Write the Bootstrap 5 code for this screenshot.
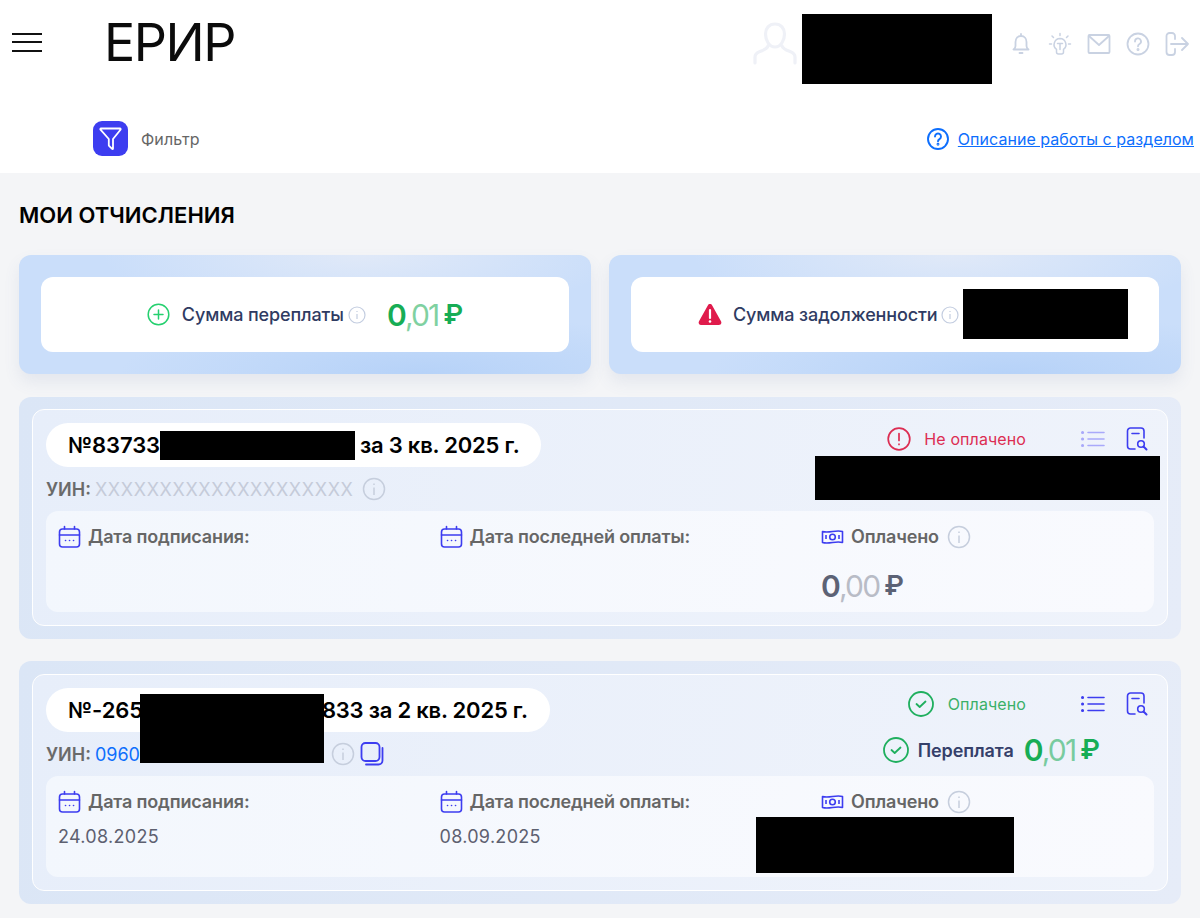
<!DOCTYPE html>
<html lang="ru">
<head>
<meta charset="utf-8">
<title>ЕРИР</title>
<link href="https://cdn.jsdelivr.net/npm/bootstrap@5.3.0/dist/css/bootstrap.min.css" rel="stylesheet">
<style>
html,body{height:918px;overflow:hidden}
body{background:#f4f5f7;font-family:Inter,"Noto Sans",sans-serif;color:#000}
svg{display:block;flex:none}
.topbar{background:#fff;height:173px}
.toprow{height:88px;padding:0 11px 0 12px}
.burger{width:30px;margin-top:-4px}
.burger span{display:block;height:2px;background:#111;margin-bottom:6.5px}
.burger span:last-child{margin-bottom:0}
.logotype{font-size:52px;line-height:1;font-weight:400;letter-spacing:-1.5px;color:#0b0b0b;margin-left:62px;margin-top:-2px}
.userzone{margin-left:auto;gap:5px}
.redact{background:#000}
.userbox{width:190px;height:70px;margin-top:10px;margin-right:12px}
.topicons{gap:15px;color:#c9d2e2}
.subrow{margin-top:33px;padding:0 6px 0 93px;height:35px}
.filterbtn{width:35px;height:35px;border-radius:9px;background:#3d3df0;border:0;padding:0}
.filtertxt{color:#666;font-size:16px;margin-left:13px;letter-spacing:.1px}
.helplink{color:#0d6efd;font-size:16px;text-decoration:underline;margin-left:9px;letter-spacing:.04px}
.maintitle{font-size:22px;font-weight:600;line-height:28px;margin:28px 0 26px}
.content{padding:0 19px}
.sumgrid{display:grid;grid-template-columns:1fr 1fr;gap:18px}
.sumouter{height:119px;padding:22px;border-radius:12px;background:radial-gradient(ellipse 300px 60px at 70% 100%,#b6d2f8,transparent),radial-gradient(ellipse 260px 60px at 60% 0,#e0e9f8,transparent),#cadefa;box-shadow:0 8px 16px rgba(90,110,160,.1)}
.suminner{height:75px;background:#fff;border-radius:12px;font-size:18px;font-weight:500;color:#2f3b62;letter-spacing:-.12px}
.money{font-weight:600;font-size:30px;line-height:34px;letter-spacing:-1.8px;display:inline-flex;align-items:center}
.money i{font-style:normal;opacity:.55;font-weight:400}
.money b{font-weight:600;margin-left:5px;letter-spacing:0;font-size:27px}
.green{color:#17ad55}
.gray{color:#5c6275}
.gray i{opacity:.4}
.dealouter{background:linear-gradient(100deg,#dbe6f6,#e6ecf8);border-radius:12px;padding:12px 13px 13px;margin-top:22px}
.dealfirst{margin-top:23px}
.dealsecond{padding-top:13px}
.dealinner{position:relative;border:1px solid #fff;border-radius:12px;padding:13px;background:linear-gradient(100deg,#e7eefa,#eff3fb)}
.dealhead{height:88px}
.pill{display:inline-flex;align-items:center;height:44px;border-radius:22px;background:#fff;padding:0 22px;font-size:22px;font-weight:600;white-space:pre;letter-spacing:-.1px}
.pilltail{letter-spacing:-.22px}
.gapmark{display:inline-block;height:29px}
.uinrow{height:44px;font-size:18px;color:#6a6a6a;font-weight:600}
.uinph{color:#c5cbd9;font-weight:400;margin-left:4px;letter-spacing:.65px}
.uinval{color:#0d6efd;font-weight:400;margin-left:4px}
.panel{height:101px;border-radius:12px;background:linear-gradient(100deg,#f3f7fd,#f9fafe);padding:14px 12px;display:grid;grid-template-columns:381.500px 381.500px 1fr}
.lbl{font-size:18px;font-weight:600;color:#666;line-height:24px;gap:6px;letter-spacing:-.15px}
.infoafter{margin-left:2px}
.val{font-size:18px;color:#5d6070;line-height:24px;margin-top:11px;letter-spacing:.3px}
.statusbar{position:absolute;right:7px;top:12px;width:345px}
.statustxt{font-size:16px;line-height:24px;letter-spacing:.1px}
.red{color:#dc2d52}
.okgreen{color:#3ab068}
.overpay{font-size:18px;font-weight:600;color:#35406a;letter-spacing:-.1px}
.blk{position:absolute}
</style>
</head>
<body>
<header class="topbar">
  <div class="toprow d-flex align-items-center">
    <div class="burger"><span></span><span></span><span></span></div>
    <div class="logotype">ЕРИР</div>
    <div class="userzone d-flex align-items-center">
      <svg width="44" height="44" viewBox="0 0 44 44" fill="none" stroke="#eff1f7" stroke-width="3.2" stroke-linecap="round" stroke-linejoin="round"><path d="M22 2c6 0 9.500 4.500 9.500 10 0 6-3.500 13-9.500 13s-9.500-7-9.500-13c0-5.500 3.500-10 9.500-10z"/><path d="M15 24c-1 3-4 4-8 5.500-3 1.200-5 2.500-5 5.500v6M29 24c1 3 4 4 8 5.500 3 1.200 5 2.500 5 5.500v6"/></svg>
      <div class="redact userbox"></div>
      <div class="topicons d-flex align-items-center">
        <svg width="24" height="24" viewBox="0 0 24 24" fill="none" stroke="currentColor" stroke-width="1.800" stroke-linecap="round" stroke-linejoin="round"><path d="M12 4c-3.500 0-5.500 2.800-5.500 6v4c0 1.500-1 2.800-2 3.500h15c-1-.7-2-2-2-3.500v-4c0-3.200-2-6-5.500-6zM12 2v2M10.500 21h3"/></svg>
        <svg width="24" height="24" viewBox="0 0 24 24" fill="none" stroke="currentColor" stroke-width="1.500" stroke-linecap="round" stroke-linejoin="round"><path d="M12 6.500a6 6 0 0 0-3.500 10.800V20a2 2 0 0 0 2 2h3a2 2 0 0 0 2-2v-2.700A6 6 0 0 0 12 6.500zM9.500 11.500h5M12 11.500v6M12 1.500v2M4 4l1.500 1.500M20 4l-1.500 1.500M1.500 12h2M20.500 12h2"/></svg>
        <svg width="24" height="24" viewBox="0 0 24 24" fill="none" stroke="currentColor" stroke-width="1.800" stroke-linejoin="round" stroke-linecap="round"><rect x="1.500" y="3" width="21" height="18" rx="1"/><path d="M2 4l10 9 10-9"/></svg>
        <svg width="24" height="24" viewBox="0 0 24 24" fill="none" stroke="currentColor" stroke-width="1.800" stroke-linecap="round"><circle cx="12" cy="12" r="10.500"/><path d="M9 9.500A3 3 0 1 1 13.500 12c-1 .6-1.500 1.200-1.500 2.300"/><circle cx="12" cy="17.500" r=".6"/></svg>
        <svg width="24" height="24" viewBox="0 0 24 24" fill="none" stroke="currentColor" stroke-width="1.800" stroke-linecap="round" stroke-linejoin="round"><path d="M10 7V4a3 3 0 0 0-3-3H4.500a3 3 0 0 0-3 3v16a3 3 0 0 0 3 3H7a3 3 0 0 0 3-3v-3M6 12h17M17 6l6 6-6 6"/></svg>
      </div>
    </div>
  </div>
  <div class="subrow d-flex align-items-center">
    <button class="filterbtn d-flex align-items-center justify-content-center" type="button" aria-label="Фильтр">
      <svg width="23" height="26" viewBox="0 0 23 26" fill="none" stroke="#fff" stroke-width="1.800" stroke-linejoin="round"><path d="M2 2.500h19c.6 0 .9.700.5 1.200L14 13v9.500c0 .6-.5.700-.9.400l-3-3a1 1 0 0 1-.3-.7V13L1.500 3.700C1.100 3.200 1.400 2.500 2 2.500z"/></svg>
    </button>
    <span class="filtertxt">Фильтр</span>
    <div class="ms-auto d-flex align-items-center">
      <svg width="22" height="22" viewBox="0 0 22 22" fill="none" stroke="#0d6efd" stroke-width="1.900" stroke-linecap="round"><circle cx="11" cy="11" r="10"/><path d="M8 8.500a3 3 0 1 1 4.500 2.600c-1 .6-1.500 1.100-1.500 2.200"/><circle cx="11" cy="16.300" r=".5"/></svg>
      <a class="helplink" href="#">Описание работы с разделом</a>
    </div>
  </div>
</header>
<main class="content">
  <h1 class="maintitle">МОИ ОТЧИСЛЕНИЯ</h1>
  <div class="sumgrid">
    <div class="sumouter">
      <div class="suminner d-flex align-items-center justify-content-center">
        <svg class="me-2" width="23" height="23" viewBox="0 0 23 23" fill="none" stroke="#25d06f" stroke-width="1.500" stroke-linecap="round"><circle cx="11.500" cy="11.500" r="10.300"/><path d="M11.500 7v9M7 11.500h9"/></svg>
        <span class="ms-1">Сумма переплаты</span>
        <svg class="ms-1" width="18" height="18" viewBox="0 0 18 18" fill="none" stroke="#c3cde0" stroke-width="1.200"><circle cx="9" cy="9" r="8"/><path d="M9 8v5M9 5v1"/></svg>
        <span class="money green" style="margin-left:21px">0<i>,01</i><b>₽</b></span>
      </div>
    </div>
    <div class="sumouter">
      <div class="suminner d-flex align-items-center position-relative" style="padding-left:67px">
        <svg width="24" height="23" viewBox="0 0 24 23" style="margin-right:11px"><path d="M12 1c1 0 1.700.5 2.200 1.400l8.800 15.900c1 1.800-.1 3.700-2.100 3.700H3.100C1.100 22 0 20.100 1 18.300L9.800 2.400C10.300 1.500 11 1 12 1z" fill="#e01b4c"/><path d="M12 7v8" stroke="#fff" stroke-width="2.200" stroke-linecap="round"/><circle cx="12" cy="18.500" r="1.300" fill="#fff"/></svg>
        <span>Сумма задолженности</span>
        <svg class="ms-1" width="18" height="18" viewBox="0 0 18 18" fill="none" stroke="#c3cde0" stroke-width="1.200"><circle cx="9" cy="9" r="8"/><path d="M9 8v5M9 5v1"/></svg>
        <div class="redact blk" style="left:332px;top:12px;width:165px;height:50px"></div>
      </div>
    </div>
  </div>

  <section class="dealouter dealfirst">
    <div class="dealinner">
      <div class="dealhead">
        <div class="pill">№83733<span class="gapmark redact" style="width:194.700px"></span><span class="pilltail"> за 3 кв. 2025 г.</span></div>
        <div class="uinrow d-flex align-items-center">УИН: <span class="uinph">XXXXXXXXXXXXXXXXXXXX</span>
          <svg class="ms-2" width="24" height="24" viewBox="0 0 24 24" fill="none" stroke="#c6cedd" stroke-width="1.500"><circle cx="12" cy="12" r="10.500"/><path d="M12 10.500V18M12 6.500V8"/></svg>
        </div>
      </div>
      <div class="panel">
        <div class="lbl d-flex"><svg width="24" height="24" viewBox="0 0 24 24" fill="none" stroke="#3d3df0" stroke-width="1.600" stroke-linecap="round"><rect x="1.500" y="4" width="20" height="18" rx="3"/><path d="M1.500 10h20M6.500 1.500V4M16.500 1.500V4M7.500 15.500h.1M11.500 15.500h.1M15.500 15.500h.1"/></svg>Дата подписания:</div>
        <div class="lbl d-flex"><svg width="24" height="24" viewBox="0 0 24 24" fill="none" stroke="#3d3df0" stroke-width="1.600" stroke-linecap="round"><rect x="1.500" y="4" width="20" height="18" rx="3"/><path d="M1.500 10h20M6.500 1.500V4M16.500 1.500V4M7.500 15.500h.1M11.500 15.500h.1M15.500 15.500h.1"/></svg>Дата последней оплаты:</div>
        <div>
          <div class="lbl d-flex align-items-center"><svg width="24" height="24" viewBox="0 0 24 24" fill="none" stroke="#3d3df0" stroke-width="1.600" stroke-linejoin="round"><path d="M1.500 6.500c7 2 13-2 20 0v11c-7-2-13 2-20 0z"/><circle cx="11.500" cy="12" r="2.800"/><path d="M5 10v4M18 10v4"/></svg>Оплачено<svg class="infoafter" width="24" height="24" viewBox="0 0 24 24" fill="none" stroke="#c6cedd" stroke-width="1.500"><circle cx="12" cy="12" r="10.500"/><path d="M12 10.500V18M12 6.500V8"/></svg></div>
          <div class="money gray" style="margin-top:20px">0<i>,00</i><b>₽</b></div>
        </div>
      </div>
      <div class="statusbar">
        <div class="d-flex align-items-center justify-content-end" style="height:34px;padding-right:12px">
          <svg width="24" height="24" viewBox="0 0 24 24" fill="none" stroke="#dc2d52" stroke-width="1.700" stroke-linecap="round"><circle cx="12" cy="12" r="10.800"/><path d="M12 6.500v7M12 17.200v.3"/></svg>
          <span class="statustxt red" style="margin:0 55px 0 13px">Не оплачено</span>
          <svg width="24" height="18" viewBox="0 0 24 18" fill="none" stroke="#a9a9fa" stroke-width="1.600" stroke-linecap="round"><path d="M7 2.500h16M7 9h16M7 15.500h16"/><path d="M1.500 2.500h.1M1.500 9h.1M1.500 15.500h.1" stroke-width="3"/></svg>
          <svg style="margin-left:21px" width="22" height="24" viewBox="0 0 22 24" fill="none" stroke="#3d3df0" stroke-width="1.600" stroke-linecap="round" stroke-linejoin="round"><path d="M18 11V4a3 3 0 0 0-3-3H4.500a3 3 0 0 0-3 3v15a3 3 0 0 0 3 3H9M6 6.500h7"/><circle cx="15" cy="17" r="3.300"/><path d="M17.500 19.500L20.500 22.500" stroke-width="2"/></svg>
        </div>
        <div class="redact" style="height:44px"></div>
      </div>
    </div>
  </section>

  <section class="dealouter dealsecond">
    <div class="dealinner">
      <div class="dealhead">
        <div class="pill">№-265<span class="gapmark" style="width:179px"></span><span class="pilltail">833 за 2 кв. 2025 г.</span></div>
        <div class="uinrow d-flex align-items-center">УИН: <span class="uinval">0960</span><span style="width:183px"></span>
          <svg class="ms-2" width="24" height="24" viewBox="0 0 24 24" fill="none" stroke="#c6cedd" stroke-width="1.500"><circle cx="12" cy="12" r="10.500"/><path d="M12 10.500V18M12 6.500V8"/></svg>
          <svg style="margin-left:5px" width="24" height="24" viewBox="0 0 24 24" fill="none" stroke="#3d3df0" stroke-width="1.800" stroke-linecap="round"><rect x="1.500" y="1" width="18" height="18" rx="4"/><path d="M22.500 6v12.500a4 4 0 0 1-4 4H6"/></svg>
        </div>
      </div>
      <div class="panel">
        <div><div class="lbl d-flex"><svg width="24" height="24" viewBox="0 0 24 24" fill="none" stroke="#3d3df0" stroke-width="1.600" stroke-linecap="round"><rect x="1.500" y="4" width="20" height="18" rx="3"/><path d="M1.500 10h20M6.500 1.500V4M16.500 1.500V4M7.500 15.500h.1M11.500 15.500h.1M15.500 15.500h.1"/></svg>Дата подписания:</div><div class="val">24.08.2025</div></div>
        <div><div class="lbl d-flex"><svg width="24" height="24" viewBox="0 0 24 24" fill="none" stroke="#3d3df0" stroke-width="1.600" stroke-linecap="round"><rect x="1.500" y="4" width="20" height="18" rx="3"/><path d="M1.500 10h20M6.500 1.500V4M16.500 1.500V4M7.500 15.500h.1M11.500 15.500h.1M15.500 15.500h.1"/></svg>Дата последней оплаты:</div><div class="val">08.09.2025</div></div>
        <div>
          <div class="lbl d-flex align-items-center"><svg width="24" height="24" viewBox="0 0 24 24" fill="none" stroke="#3d3df0" stroke-width="1.600" stroke-linejoin="round"><path d="M1.500 6.500c7 2 13-2 20 0v11c-7-2-13 2-20 0z"/><circle cx="11.500" cy="12" r="2.800"/><path d="M5 10v4M18 10v4"/></svg>Оплачено<svg class="infoafter" width="24" height="24" viewBox="0 0 24 24" fill="none" stroke="#c6cedd" stroke-width="1.500"><circle cx="12" cy="12" r="10.500"/><path d="M12 10.500V18M12 6.500V8"/></svg></div>
        </div>
      </div>
      <div class="statusbar">
        <div class="d-flex align-items-center justify-content-end" style="height:34px;padding-right:12px">
          <svg width="26" height="26" viewBox="0 0 26 26" fill="none" stroke="#1faf5e" stroke-width="1.800" stroke-linecap="round" stroke-linejoin="round"><circle cx="13" cy="13" r="12"/><path d="M8.500 13l3.200 3 5.800-5.500"/></svg>
          <span class="statustxt okgreen" style="margin:0 55px 0 14px">Оплачено</span>
          <svg width="24" height="18" viewBox="0 0 24 18" fill="none" stroke="#3d3df0" stroke-width="1.600" stroke-linecap="round"><path d="M7 2.500h16M7 9h16M7 15.500h16"/><path d="M1.500 2.500h.1M1.500 9h.1M1.500 15.500h.1" stroke-width="3"/></svg>
          <svg style="margin-left:21px" width="22" height="24" viewBox="0 0 22 24" fill="none" stroke="#3d3df0" stroke-width="1.600" stroke-linecap="round" stroke-linejoin="round"><path d="M18 11V4a3 3 0 0 0-3-3H4.500a3 3 0 0 0-3 3v15a3 3 0 0 0 3 3H9M6 6.500h7"/><circle cx="15" cy="17" r="3.300"/><path d="M17.500 19.500L20.500 22.500" stroke-width="2"/></svg>
        </div>
        <div class="d-flex align-items-center justify-content-end" style="height:44px;padding-right:60px;margin-top:7px">
          <svg width="26" height="26" viewBox="0 0 26 26" fill="none" stroke="#1faf5e" stroke-width="1.800" stroke-linecap="round" stroke-linejoin="round"><circle cx="13" cy="13" r="12"/><path d="M8.500 13l3.200 3 5.800-5.500"/></svg>
          <span class="overpay" style="margin:0 10px 0 9px">Переплата</span>
          <span class="money green">0<i>,01</i><b>₽</b></span>
        </div>
      </div>
      <div class="redact blk" style="left:107px;top:19px;width:184px;height:69px"></div>
      <div class="redact blk" style="left:723px;top:142px;width:258px;height:56px"></div>
    </div>
  </section>
</main>
</body>
</html>
